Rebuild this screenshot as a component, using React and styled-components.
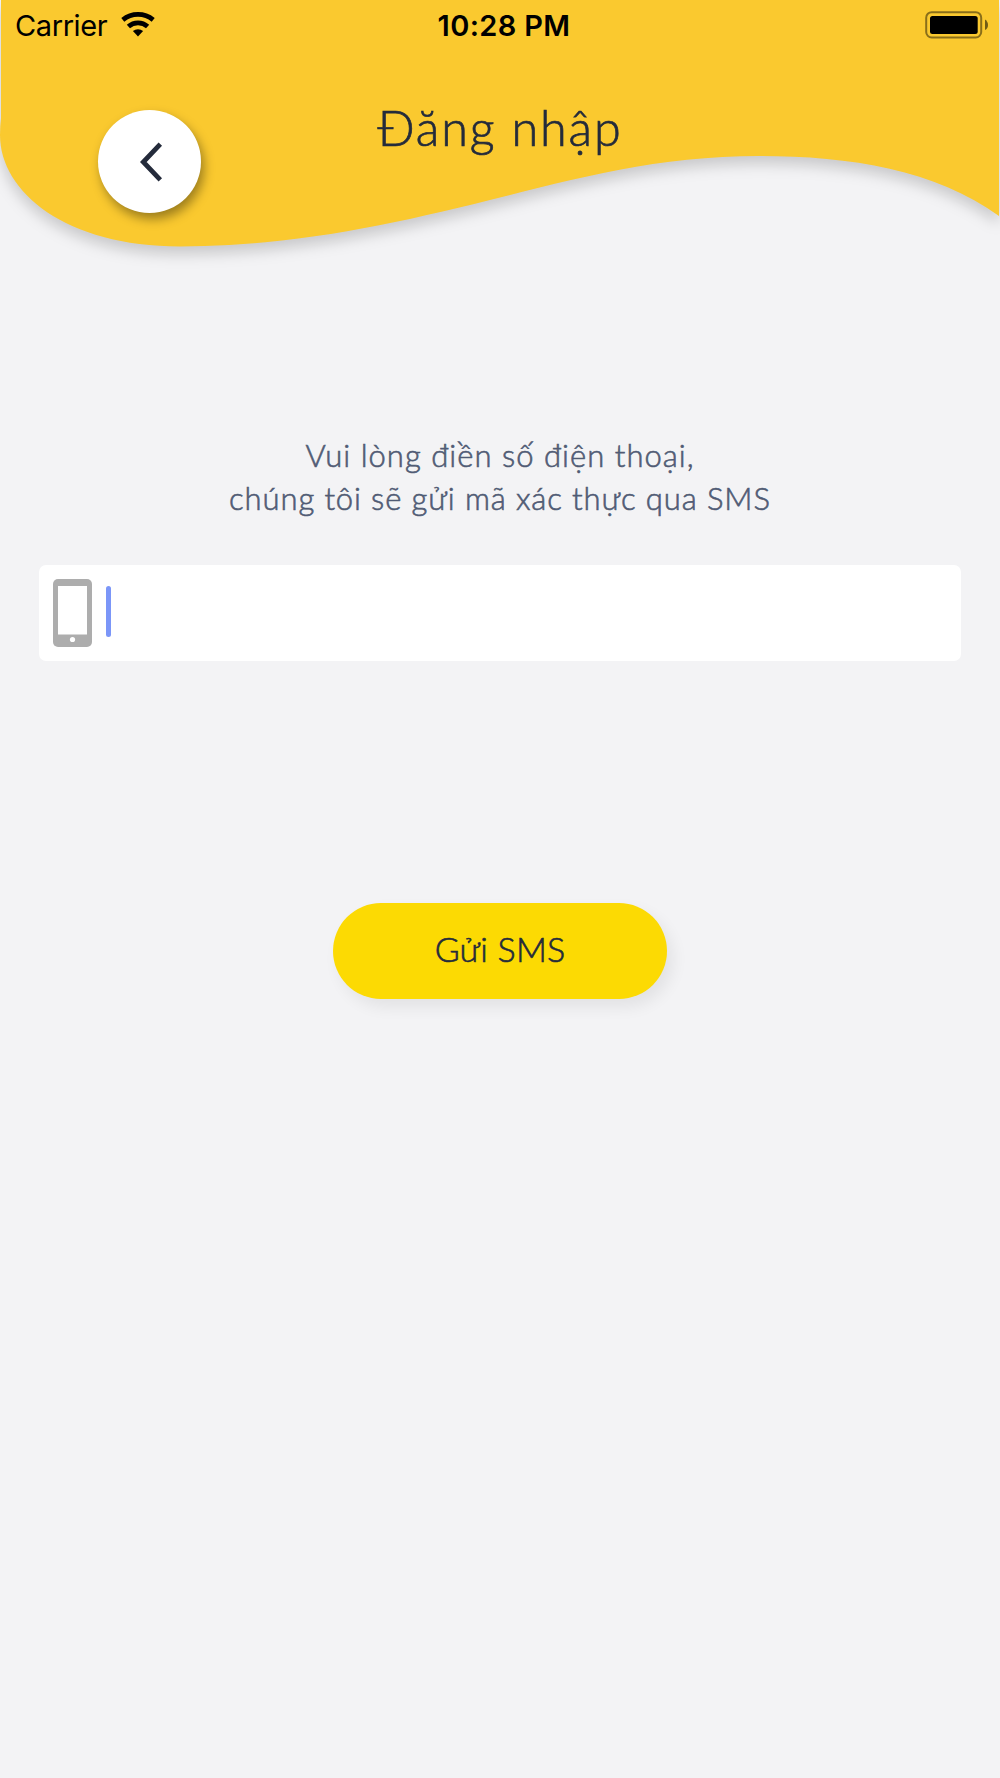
import styled, { createGlobalStyle } from 'styled-components';

export default function SignIn(){
    return (
    <Screen>
        <GlobalStyle />
        <Header>
            <Wave viewBox="0 0 1000 290">
                <path
                    d="M1 0H999V216C936 170 850 156 760 156C658 156 578 178 490 200C390 225 290 246.5 180 246.5C66 246.5 0 192 0 135Q0 126 1 118Z"
                    fill="#FAC92F"
                />
            </Wave>
            <StatusBar>
                <Carrier>
                    <span>Carrier</span>
                    <WifiIcon />
                </Carrier>
                <Clock>10:28 PM</Clock>
                <BatteryIcon />
            </StatusBar>
            <TitleBar>
                <BackButton aria-label="Quay lại">
                    <svg width="24" height="40" viewBox="0 0 24 40" fill="none" stroke="#242B3B" strokeWidth="4.8">
                        <path d="M20.3 2.2L3.3 20L20.3 37.8" />
                    </svg>
                </BackButton>
                <Title>Đăng nhập</Title>
            </TitleBar>
        </Header>
        <Form>
            <Line spacing="1.03px">Vui lòng điền số điện thoại,</Line>
            <Line spacing="0.88px">chúng tôi sẽ gửi mã xác thực qua SMS</Line>
            <PhoneField>
                <PhoneIcon />
                <Caret />
            </PhoneField>
            <Button type="button">Gửi SMS</Button>
        </Form>
    </Screen>
    )
}

function WifiIcon(){
    return (
        <svg width="34" height="25" viewBox="0 0 34 25">
            <g fill="none" stroke="#000000" strokeWidth="4.8">
                <path d="M1.8 7.9A24 24 0 0 1 32.2 7.9" />
                <path d="M7.4 14.5A14.4 14.4 0 0 1 26.6 14.5" />
            </g>
            <path d="M11.9 19.1A7.6 7.6 0 0 1 22.1 19.1L17 24.5Z" />
        </svg>
    )
}

function BatteryIcon(){
    return (
        <svg width="64" height="28" viewBox="0 0 64 28">
            <rect x="1.2" y="1.2" width="55" height="25.3" rx="5.5" fill="none" stroke="#000000" strokeOpacity="0.45" strokeWidth="2" />
            <rect x="5" y="5" width="47.7" height="18" rx="2.5" />
            <path d="M60 8.5Q63 10.5 63 14T60 19Z" fillOpacity="0.55" />
        </svg>
    )
}

function PhoneIcon(){
    return (
        <svg width="39" height="68" viewBox="0 0 39 68">
            <rect width="39" height="68" rx="5" fill="#ADADAD" />
            <rect x="5" y="7" width="29" height="48.5" fill="#FFFFFF" />
            <circle cx="19.5" cy="60.5" r="2.6" fill="#FFFFFF" />
        </svg>
    )
}


const GlobalStyle = createGlobalStyle`
    body{
        margin: 0;
        background-color: #F3F3F5;
    }

    button{
        border: 0px;
        padding: 0;
        cursor: pointer;
    }
`

const Screen = styled.div`
    width: 1000px;
    height: 1778px;
    overflow: hidden;
    background-color: #F3F3F5;
    font-family: Lato, "Open Sans", sans-serif;
    font-weight: 300;
`

const Header = styled.header`
    height: 290px;
    position: relative;
    display: flex;
    flex-direction: column;
`

const Wave = styled.svg`
    position: absolute;
    inset: 0;
    width: 1000px;
    height: 290px;
    overflow: visible;
    filter: drop-shadow(0 8px 7px rgba(0, 0, 0, 0.17));
`

const StatusBar = styled.div`
    position: relative;
    height: 52px;
    display: grid;
    grid-template-columns: 1fr auto 1fr;
    align-items: center;
    padding: 0 11px 0 15px;
    box-sizing: border-box;
    font-family: Inter, sans-serif;
    font-size: 29px;
    font-weight: 400;
    line-height: 52px;
    color: #000000;

    > svg{
        justify-self: end;
        margin-bottom: 3px;
    }
`

const Carrier = styled.div`
    display: flex;
    align-items: center;
    gap: 14px;
    letter-spacing: -0.4px;

    svg{
        margin-bottom: 3px;
    }
`

const Clock = styled.div`
    padding-left: 4px;
    font-weight: 600;
    letter-spacing: 0.35px;
`

const TitleBar = styled.div`
    position: relative;
    display: grid;
    grid-template-columns: 202px 1fr 202px;
    padding-top: 41px;
`

const BackButton = styled.button`
    width: 103px;
    height: 103px;
    margin: 17px 0 0 98px;
    border-radius: 50%;
    background-color: #FFFFFF;
    box-shadow: 3px 6px 11px rgba(0, 0, 0, 0.38);
    display: flex;
    align-items: center;
    justify-content: center;

    svg{
        margin-left: 5px;
    }
`

const Title = styled.h1`
    margin: 0;
    text-align: center;
    font-size: 48.5px;
    font-weight: 300;
    line-height: 68px;
    letter-spacing: 1.9px;
    color: #242B3B;
    -webkit-text-stroke: 0.7px #242B3B;
`

const Form = styled.form`
    display: flex;
    flex-direction: column;
    align-items: center;
    padding: 144px 39px 0;
`

const Line = styled.p`
    margin: 0;
    font-size: 31px;
    line-height: 43px;
    letter-spacing: ${({ spacing }) => spacing};
    white-space: nowrap;
    color: #505B74;
    -webkit-text-stroke: 0.6px #505B74;
`

const PhoneField = styled.div`
    width: 922px;
    height: 96px;
    margin-top: 45px;
    padding-left: 14px;
    box-sizing: border-box;
    display: flex;
    align-items: center;
    gap: 14px;
    background-color: #FFFFFF;
    border-radius: 7px;
`

const Caret = styled.span`
    width: 5px;
    height: 51px;
    border-radius: 3px;
    margin-bottom: 4px;
    background-color: #7B96F8;
`

const Button = styled.button`
    width: 334px;
    height: 96px;
    margin-top: 242px;
    padding-bottom: 6px;
    border-radius: 48px;
    background-color: #FCDA03;
    box-shadow: 6px 8px 16px rgba(0, 0, 0, 0.07);
    font-family: inherit;
    font-size: 34px;
    font-weight: 300;
    letter-spacing: 0.2px;
    color: #242B3B;
    -webkit-text-stroke: 0.6px #242B3B;
`
